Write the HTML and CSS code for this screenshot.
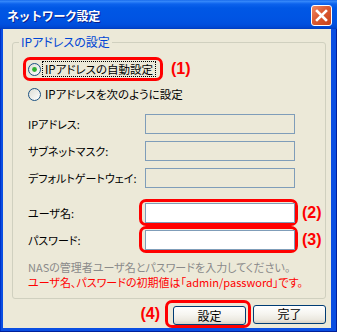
FILE: index.html
```html
<!DOCTYPE html>
<html lang="ja">
<head>
    <meta charset="UTF-8">
    <title>ネットワーク設定</title>
    <link rel="stylesheet" href="styles.css">
</head>
<body>

<div class="window">
    <div class="titlebar">
        <span class="title">ネットワーク設定</span>
        <span class="close">
            <svg width="19" height="19" viewBox="0 0 19 19">
                <path d="M5 5 L14 14 M14 5 L5 14" stroke="#fff" stroke-width="2.6" stroke-linecap="square"/>
            </svg>
        </span>
    </div>

    <div class="client">
        <fieldset class="group">
            <legend>IPアドレスの設定</legend>

            <div class="radio-row first">
                <span class="mark on">
                    <svg class="radio" width="13" height="13" viewBox="0 0 13 13">
                        <defs>
                            <linearGradient id="rg" x1="0" y1="0" x2="1" y2="1">
                                <stop offset="0" stop-color="#dcdcd4"/>
                                <stop offset="1" stop-color="#ffffff"/>
                            </linearGradient>
                        </defs>
                        <circle cx="6.5" cy="6.5" r="6" fill="url(#rg)" stroke="#1c5180"/>
                        <circle cx="6.5" cy="6.5" r="2.4" fill="#2fae2f"/>
                    </svg>
                    <span class="focus">IPアドレスの自動設定</span>
                </span>
                <span class="step">(1)</span>
            </div>

            <div class="radio-row">
                <span class="mark">
                    <svg class="radio" width="13" height="13" viewBox="0 0 13 13">
                        <circle cx="6.5" cy="6.5" r="6" fill="url(#rg)" stroke="#1c5180"/>
                    </svg>
                    <span class="focus off">IPアドレスを次のように設定</span>
                </span>
            </div>

            <div class="field-row ip">
                <span class="label">IPアドレス:</span>
                <input class="box" type="text" disabled>
            </div>
            <div class="field-row">
                <span class="label">サブネットマスク:</span>
                <input class="box" type="text" disabled>
            </div>
            <div class="field-row">
                <span class="label">デフォルトゲートウェイ:</span>
                <input class="box" type="text" disabled>
            </div>

            <div class="field-row account">
                <span class="label short">ユーザ名:</span>
                <span class="mark on field"><input class="box" type="text"></span>
                <span class="step">(2)</span>
            </div>
            <div class="field-row pass">
                <span class="label short">パスワード:</span>
                <span class="mark on field"><input class="box" type="password"></span>
                <span class="step">(3)</span>
            </div>

            <p class="note gray">NASの管理者ユーザ名とパスワードを入力してください。</p>
            <p class="note red">ユーザ名、パスワードの初期値は「admin/password」です。</p>
        </fieldset>

        <div class="buttons">
            <span class="step">(4)</span>
            <span class="mark on btn-mark"><button class="btn">設定</button></span>
            <button class="btn done">完了</button>
        </div>
    </div>
</div>

</body>
</html>
```

FILE: styles.css
```css
* {
    box-sizing: border-box;
}
html, body {
    margin: 0;
    padding: 0;
}
body {
    width: 337px;
    height: 332px;
    overflow: hidden;
    font-family: "Noto Sans CJK JP", sans-serif;
    font-size: 11px;
    font-feature-settings: "palt" 1;
    color: #000;
}
.window {
    width: 337px;
    height: 332px;
    display: flex;
    flex-direction: column;
    background: #0a4ee2;
    box-shadow: inset -1px -1px 0 #00209a, inset 1px 0 0 #0032c8;
}
.titlebar {
    height: 29px;
    flex: none;
    display: flex;
    align-items: center;
    justify-content: space-between;
    padding: 1px 5px 0 7px;
    background: linear-gradient(to bottom, #0a5de6 0px, #3b8cfa 1px, #2a7ef7 2px, #0c62ec 4px,
        #0057e5 8px, #0054e3 18px, #0050df 24px, #0048d4 27px, #003dc0 29px);
}
.title {
    color: #fff;
    font-weight: bold;
    font-size: 12px;
    font-feature-settings: normal;
    letter-spacing: -0.4px;
    text-shadow: 1px 1px 0 #0a1f8a;
}
.close {
    width: 21px;
    height: 21px;
    display: flex;
    align-items: center;
    justify-content: center;
    border: 1px solid #fff;
    border-radius: 3px;
    background: linear-gradient(135deg, #f08a66 0%, #dc5a32 45%, #c8421a 100%);
}
.client {
    flex: 1;
    margin: 0 6px 4px 3px;
    padding: 0 5px 0 9px;
    background: #ece9d8;
    display: flex;
    flex-direction: column;
}
.group {
    margin: 6px 0 0 0;
    padding: 0 0 8px 0;
    border: 1px solid #d0d0bf;
    border-radius: 3px;
    min-width: 0;
}
.group legend {
    margin-left: 6px;
    padding: 0 2px;
    color: #0046d5;
    font-size: 12px;
    line-height: 14px;
}
.radio-row {
    display: flex;
    align-items: center;
    margin: 1px 0 0 10px;
}
.radio-row.first {
    margin-top: 8px;
}
.mark {
    display: inline-flex;
    align-items: center;
    height: 24px;
    padding: 0 4px 0 2px;
    border: 3px solid transparent;
    border-radius: 7px;
}
.mark.on {
    border-color: #f00;
}
.radio {
    flex: none;
    margin-right: 1px;
}
.focus {
    border: 1px dotted #000;
    padding: 0 2px;
    line-height: 14px;
    font-size: 11.5px;
}
.focus.off {
    border-color: transparent;
}
.step {
    font-family: "Liberation Sans", Arial, sans-serif;
    font-weight: bold;
    font-size: 16px;
    color: #f00;
    margin-left: 8px;
}
.field-row {
    display: flex;
    align-items: center;
    padding-left: 15px;
    margin-top: 7px;
}
.field-row.ip {
    margin-top: 8px;
}
.field-row.account {
    margin-top: 11px;
}
.field-row.pass {
    margin-top: 0;
}
.label {
    width: 117px;
    flex: none;
    white-space: nowrap;
}
.label.short {
    width: 111px;
}
.box {
    width: 150px;
    height: 20px;
    margin: 0;
    border: 1px solid #7f9db9;
    background: #fff;
    font: inherit;
}
.box:disabled {
    background: #ece9d8;
}
.mark.field {
    height: auto;
    padding: 1px 0 0 3px;
}
.field-row .step {
    margin-left: 4px;
}
.note {
    margin: 0;
    padding-left: 15px;
    line-height: 15px;
    white-space: nowrap;
}
.note.gray {
    margin-top: 7px;
    color: #8a8a8a;
}
.note.red {
    color: #f00;
}
.buttons {
    display: flex;
    justify-content: flex-end;
    align-items: center;
    margin-top: 1px;
}
.buttons .step {
    margin: 0 5px 0 0;
}
.mark.btn-mark {
    height: auto;
    padding: 3px 2px 0 5px;
}
.btn {
    width: 73px;
    height: 19px;
    padding: 0;
    border: 1px solid #003c74;
    border-radius: 3px;
    background: linear-gradient(to bottom, #ffffff 0%, #f6f5f0 45%, #ebe8df 80%, #d6d0c5 100%);
    font: inherit;
    font-size: 12px;
    line-height: 16px;
    color: #000;
}
.btn.done {
    margin-left: 2px;
}
```
